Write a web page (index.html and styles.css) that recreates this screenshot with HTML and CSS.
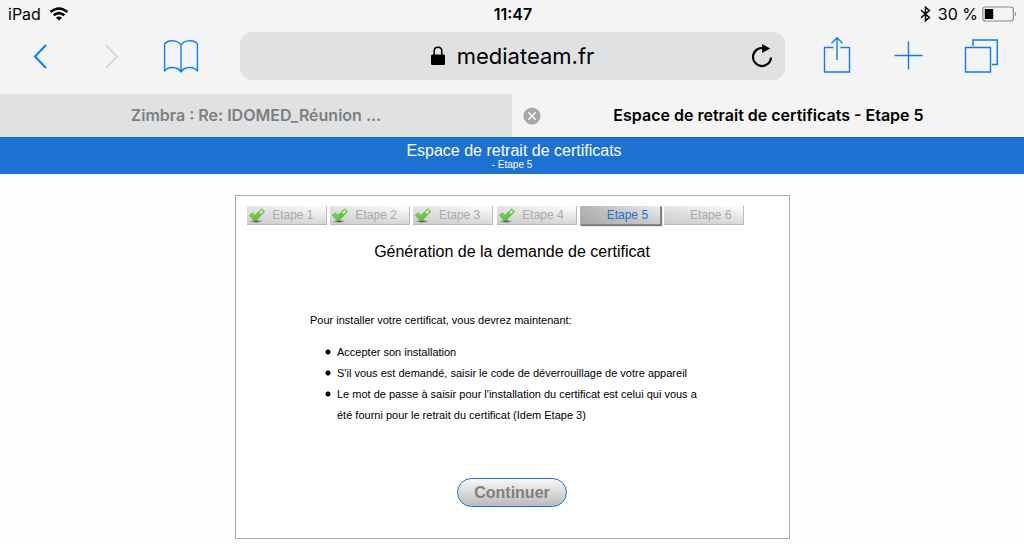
FILE: index.html
```
<!DOCTYPE html>
<html lang="fr">
<head>
    <meta charset="UTF-8">
    <meta name="viewport" content="width=device-width, initial-scale=1.0">
    <title>Espace de retrait de certificats - Etape 5</title>
    <link rel="stylesheet" href="styles.css">
</head>
<body>
    <!-- Icon shared by the finished steps -->
    <svg class="defs" width="0" height="0" aria-hidden="true">
        <defs>
            <linearGradient id="green" x1="0" y1="0" x2="1" y2="1">
                <stop offset="0" stop-color="#8fe060"/>
                <stop offset="1" stop-color="#41b81c"/>
            </linearGradient>
            <radialGradient id="shade">
                <stop offset="0" stop-color="#444"/>
                <stop offset="1" stop-color="#444" stop-opacity="0"/>
            </radialGradient>
            <symbol id="check" viewBox="0 0 18 16">
                <ellipse cx="9" cy="14.4" rx="7" ry="1.6" fill="url(#shade)"/>
                <path d="M2.4 8.2 L5.4 6 L8 8.4 L14.6 2 L17.6 4.4 L9 13.6 L7.2 13.6 Z" fill="url(#green)" stroke="#58b53a" stroke-width=".8" stroke-linejoin="round"/>
                <path d="M12.3 5.4 L14.7 2.9 L16.3 4.3 L13.8 6.9 Z" fill="#d9f5ca"/>
            </symbol>
        </defs>
    </svg>

    <div class="browser">
        <div class="status">
            <div class="status-left">
                <span>iPad</span>
                <svg width="20" height="14" viewBox="0 0 20 14" fill="none" stroke="#000" stroke-width="2.5">
                    <path d="M1.5 5 Q10 -2 18.5 5"/>
                    <path d="M4.6 8.3 Q10 3.9 15.4 8.3"/>
                    <path d="M10 13.6 L6.9 10.7 Q10 8.3 13.1 10.7 Z" fill="#000" stroke="none"/>
                </svg>
            </div>
            <div class="time">11:47</div>
            <div class="status-right">
                <svg width="11" height="16" viewBox="0 0 11 16" fill="none" stroke="#000" stroke-width="1.5">
                    <path d="M1 4.2 L9.4 11.4 L5.5 14.7 V1.3 L9.4 4.6 L1 11.8"/>
                </svg>
                <span>30 %</span>
                <svg width="36" height="16" viewBox="0 0 36 16">
                    <rect x=".8" y="1" width="30.6" height="14" rx="2.5" fill="none" stroke="#8b8b8b" stroke-width="1.2"/>
                    <rect x="2.8" y="3" width="8.4" height="10" fill="#000"/>
                    <path d="M33 5.5 Q35.4 8 33 10.5 Z" fill="#8b8b8b"/>
                </svg>
            </div>
        </div>

        <div class="toolbar">
            <div class="tools tools-left">
                <button type="button" aria-label="Page précédente">
                    <svg width="16" height="26" viewBox="0 0 16 26" fill="none" stroke="#0a7bff" stroke-width="2"><path d="M13 2 L2 13.5 L13 25"/></svg>
                </button>
                <button type="button" aria-label="Page suivante" disabled>
                    <svg width="16" height="26" viewBox="0 0 16 26" fill="none" stroke="#d9d9da" stroke-width="2"><path d="M3 2 L14 13.5 L3 25"/></svg>
                </button>
                <button type="button" aria-label="Signets">
                    <svg width="36" height="34" viewBox="0 0 36 34" fill="none" stroke="#0a7bff" stroke-width="1.4" stroke-linejoin="round">
                        <path d="M18 6 C15 .6 5 .6 1.6 5 V32 C5 27.2 14.5 27 18 33 C21.5 27 31 27.2 34.4 32 V5 C31 .6 21 .6 18 6 Z M18 6 V33"/>
                    </svg>
                </button>
            </div>
            <div class="address">
                <div class="address-text">
                    <svg width="14" height="20" viewBox="0 0 14 20">
                        <path d="M3.2 9 V5 Q3.2 1.2 7 1.2 Q10.8 1.2 10.8 5 V9" fill="none" stroke="#000" stroke-width="1.5"/>
                        <rect y="8.4" width="14" height="10.6" rx="1.3"/>
                    </svg>
                    <span>mediateam.fr</span>
                </div>
                <button type="button" aria-label="Recharger">
                    <svg width="22" height="26" viewBox="0 0 22 26">
                        <path d="M13.6 5.4 A9 9 0 1 0 20 14.5" fill="none" stroke="#000" stroke-width="2.2"/>
                        <path d="M11 1 L19.3 5.5 L11 10 Z"/>
                    </svg>
                </button>
            </div>
            <div class="tools tools-right">
                <button type="button" aria-label="Partager">
                    <svg width="28" height="38" viewBox="0 0 28 38" fill="none" stroke="#0a7bff" stroke-width="1.4">
                        <path d="M10.5 10.5 H1.5 V35 H26.5 V10.5 H17.5 M14 23 V1 M8.5 6.3 L14 .8 L19.5 6.3"/>
                    </svg>
                </button>
                <button type="button" aria-label="Nouvel onglet">
                    <svg width="30" height="30" viewBox="0 0 30 30" stroke="#0a7bff" stroke-width="1.4"><path d="M14.5 .5 V28.5 M.5 14.5 H28.5"/></svg>
                </button>
                <button type="button" aria-label="Onglets">
                    <svg width="34" height="34" viewBox="0 0 34 34" fill="none" stroke="#0a7bff" stroke-width="1.4">
                        <path d="M1.5 8.5 H26.5 V33 H1.5 Z M9 7 V1 H33.3 V25.5 H28"/>
                    </svg>
                </button>
            </div>
        </div>

        <nav class="tabs">
            <a href="#" class="tab">Zimbra : Re: IDOMED_Réunion ...</a>
            <div class="tab tab-active">
                <button type="button" aria-label="Fermer l'onglet">
                    <svg width="18" height="18" viewBox="0 0 18 18">
                        <circle cx="9" cy="9" r="8.6" fill="#a7a7a8"/>
                        <path d="M5.3 5.3 L12.7 12.7 M12.7 5.3 L5.3 12.7" stroke="#fff" stroke-width="1.4"/>
                    </svg>
                </button>
                <a href="#">Espace de retrait de certificats - Etape 5</a>
            </div>
        </nav>
    </div>

    <header>
        <h1>Espace de retrait de certificats</h1>
        <p>- Etape 5</p>
    </header>

    <main class="container">
        <ol class="steps">
            <li><svg width="18" height="16"><use href="#check"/></svg><span>Etape 1</span></li>
            <li><svg width="18" height="16"><use href="#check"/></svg><span>Etape 2</span></li>
            <li><svg width="18" height="16"><use href="#check"/></svg><span>Etape 3</span></li>
            <li><svg width="18" height="16"><use href="#check"/></svg><span>Etape 4</span></li>
            <li class="current"><span>Etape 5</span></li>
            <li><span>Etape 6</span></li>
        </ol>

        <h2>Génération de la demande de certificat</h2>

        <div class="instructions">
            <p>Pour installer votre certificat, vous devrez maintenant:</p>
            <ul>
                <li>Accepter son installation</li>
                <li>S'il vous est demandé, saisir le code de déverrouillage de votre appareil</li>
                <li>Le mot de passe à saisir pour l'installation du certificat est celui qui vous a été fourni pour le retrait du certificat (Idem Etape 3)</li>
            </ul>
        </div>

        <button type="button" class="continue">Continuer</button>
    </main>
</body>
</html>
```

FILE: styles.css
```
* { box-sizing: border-box; }
body { font-family: "Liberation Sans", Arial, sans-serif; background-color: #fefefe; color: #000; margin: 0; }
h1, h2, p, ul, ol { margin: 0; padding: 0; font-weight: normal; }
button { border: none; background: none; padding: 0; font-family: inherit; }
svg { display: block; flex: none; }
a { color: inherit; text-decoration: none; }
.defs { position: absolute; }

/* Browser bars */
.browser { background-color: #f4f4f4; font-family: Inter, sans-serif; }
.status { display: grid; grid-template-columns: 1fr auto 1fr; align-items: center; padding: 4px 6px 0 8px; font-size: 16px; line-height: 20px; }
.status-left, .status-right { display: flex; align-items: center; gap: 8px; }
.status-right { justify-content: flex-end; gap: 4px; }
.status-right span { padding-left: 3px; }
.time { font-weight: 600; }
.toolbar { display: grid; grid-template-columns: 240px 1fr 239px; padding: 8px 0 14px; }
.tools { display: grid; align-items: center; }
.tools button { display: flex; justify-content: center; }
.tools-left { grid-template-columns: repeat(3, 70px); padding-left: 6px; }
.tools-right { grid-template-columns: repeat(3, 72px); padding-left: 16px; }
.address { display: flex; align-items: center; height: 48px; padding: 0 12px 0 34px; background-color: #e0e1e3; border-radius: 12px; }
.address-text { flex: 1; display: flex; align-items: center; justify-content: center; gap: 12px; font-size: 22px; }
.tabs { display: grid; grid-template-columns: 1fr 1fr; font-size: 16px; font-weight: 600; line-height: 43px; text-align: center; }
.tab { background-color: #e0e1e3; color: #7d7e80; }
.tab-active { display: flex; align-items: center; background-color: #f4f4f4; color: #000; padding: 0 28px 0 11px; }
.tab-active a { flex: 1; }

/* Page */
header { background-color: #1c72d0; color: #fff; text-align: center; padding: 4px 0; border-top: 1px solid #1a61b0; }
h1 { font-size: 16px; line-height: 18px; padding-left: 4px; }
header p { font-size: 10px; line-height: 10px; }
.container { width: 555px; max-width: 100%; margin: 21px auto 5px; padding: 10px 11px 31px; background: white; border: 1px solid #aaa; }
.steps { display: flex; justify-content: space-between; max-width: 498px; list-style: none; }
.steps li { display: flex; align-items: center; justify-content: flex-end; width: 80px; height: 19px; padding-right: 12px; font-size: 12px; white-space: nowrap; color: #aaa; background: linear-gradient(to top, rgba(190, 190, 190, 0.6), rgba(255, 255, 255, 0)), linear-gradient(to right, #e4e4e4, #fff); border-right: 1px solid #bbb; border-bottom: 1px solid #bbb; }
.steps svg { margin-right: auto; }
.steps .current { width: 81px; color: #1c72d0; background: linear-gradient(to top, rgba(150, 150, 150, 0.4), rgba(255, 255, 255, 0)), linear-gradient(to right, #b4b4b4, #eee); border-color: #888; box-shadow: 1px 1px 1px #777; }
h2 { font-size: 16px; line-height: 20px; text-align: center; margin-top: 17px; }
.instructions { width: 404px; max-width: 100%; margin: 48px auto 0; font-size: 11px; line-height: 21px; }
.instructions ul { margin-top: 11px; padding-left: 15px; list-style: none; }
.instructions li { padding-left: 12px; background: radial-gradient(circle at 3px 10px, #000 2px, transparent 3px); }
.continue { display: block; width: 110px; height: 29px; margin: 52px auto 0; font-size: 16px; font-weight: bold; color: #808080; background: linear-gradient(#f8f8f8, #bbb); border: 1px solid #1c72d0; border-radius: 15px; }
```
